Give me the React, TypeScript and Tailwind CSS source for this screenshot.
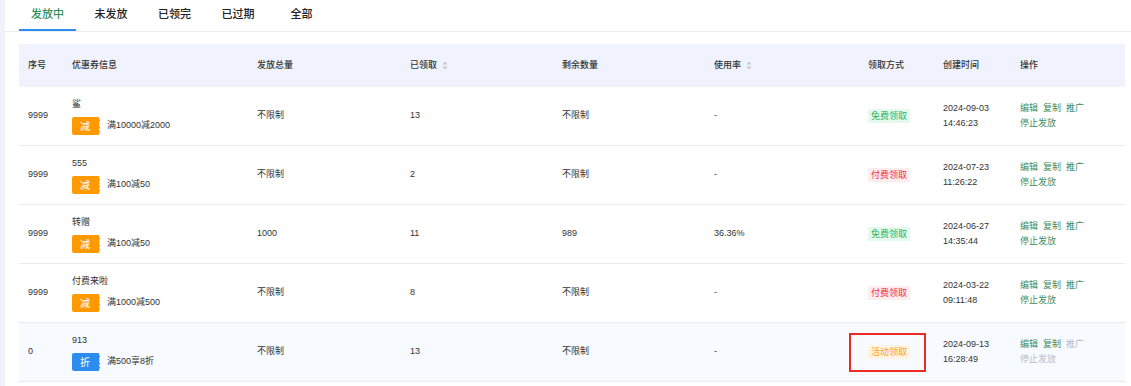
type Row = {
  id: string
  title: string
  kind: 'reduce' | 'discount'
  rule: string
  total: string
  claimed: string
  remain: string
  rate: string
  method: 'free' | 'paid' | 'event'
  date: string
  time: string
  disabled?: boolean
  highlight?: boolean
}

const rows: Row[] = [
  { id: '9999', title: '鲨', kind: 'reduce', rule: '满10000减2000', total: '不限制', claimed: '13', remain: '不限制', rate: '-', method: 'free', date: '2024-09-03', time: '14:46:23' },
  { id: '9999', title: '555', kind: 'reduce', rule: '满100减50', total: '不限制', claimed: '2', remain: '不限制', rate: '-', method: 'paid', date: '2024-07-23', time: '11:26:22' },
  { id: '9999', title: '转赠', kind: 'reduce', rule: '满100减50', total: '1000', claimed: '11', remain: '989', rate: '36.36%', method: 'free', date: '2024-06-27', time: '14:35:44' },
  { id: '9999', title: '付费来啦', kind: 'reduce', rule: '满1000减500', total: '不限制', claimed: '8', remain: '不限制', rate: '-', method: 'paid', date: '2024-03-22', time: '09:11:48' },
  { id: '0', title: '913', kind: 'discount', rule: '满500享8折', total: '不限制', claimed: '13', remain: '不限制', rate: '-', method: 'event', date: '2024-09-13', time: '16:28:49', disabled: true, highlight: true },
]

const tabs = ['发放中', '未发放', '已领完', '已过期', '全部']

const methodMeta = {
  free: { label: '免费领取', cls: 'bg-[#e6f9ed] text-[#2bb35e]' },
  paid: { label: '付费领取', cls: 'bg-[#ffedf0] text-[#f0303f]' },
  event: { label: '活动领取', cls: 'bg-[#fff4e2] text-[#ff9c1f]' },
}

const cols = 'grid grid-cols-[44px_185px_153px_152px_152px_154px_75px_77px_114px]'

function SortIcon() {
  return (
    <svg width="6" height="9" viewBox="0 0 6 9" className="ml-[5px]">
      <path d="M3 0.5L5.5 3.5H0.5Z" fill="#c5c8ce" />
      <path d="M3 8.5L5.5 5.5H0.5Z" fill="#c5c8ce" />
    </svg>
  )
}

function CouponTag({ kind }: { kind: Row['kind'] }) {
  const bg = kind === 'reduce' ? 'bg-[#ff9900]' : 'bg-[#2d8cf0]'
  return (
    <span className={`relative flex h-[18px] w-[28px] items-center justify-center rounded-[2px] pr-[2px] text-[10px] text-white ${bg}`}>
      {kind === 'reduce' ? '减' : '折'}
      <span className="absolute right-[-1.5px] top-0 bottom-0 flex flex-col justify-around">
        {[0, 1, 2, 3, 4].map((i) => (
          <span key={i} className="block h-[3px] w-[3px] rounded-full bg-white" />
        ))}
      </span>
    </span>
  )
}

export default function App() {
  return (
    <div className="flex h-[386px] w-[1131px] bg-white text-[9px] text-[#333] [font-family:'Liberation_Sans','Noto_Sans_CJK_SC',sans-serif]">
      <div className="w-[5px] shrink-0 bg-[#eff1fb]" />
      <div className="flex-1">
        <div className="flex h-[32px] gap-[6.5px] border-b border-[#eceef2] pl-[14px]">
          {tabs.map((t, i) => (
            <div
              key={t}
              className={`flex w-[57px] items-center justify-center pb-[1px] text-[11px] font-medium ${
                i === 0 ? 'border-b-2 border-[#2d8cf0] text-[#2f8f58]' : 'border-b-2 border-transparent text-[#222]'
              }`}
            >
              {t}
            </div>
          ))}
        </div>

        <div className="ml-[14px] mt-[12px] w-[1106px]">
          <div className={`${cols} h-[43px] items-center bg-[#f0f3fd] font-medium text-[#333]`}>
            <div className="pl-[9px]">序号</div>
            <div className="pl-[9px]">优惠券信息</div>
            <div className="pl-[9px]">发放总量</div>
            <div className="flex items-center pl-[9px]">已领取<SortIcon /></div>
            <div className="pl-[9px]">剩余数量</div>
            <div className="flex items-center pl-[9px]">使用率<SortIcon /></div>
            <div className="pl-[9px]">领取方式</div>
            <div className="pl-[9px]">创建时间</div>
            <div className="pl-[9px]">操作</div>
          </div>

          {rows.map((r, idx) => {
            const m = methodMeta[r.method]
            return (
              <div
                key={idx}
                className={`${cols} h-[59px] items-center border-b border-[#e9ebef] ${r.highlight ? 'bg-[#f7faff]' : ''}`}
              >
                <div className="pl-[9px]">{r.id}</div>
                <div className="flex flex-col gap-[5px] pl-[9px]">
                  <span className="leading-[15px]">{r.title}</span>
                  <div className="flex items-center gap-[7px]">
                    <CouponTag kind={r.kind} />
                    <span>{r.rule}</span>
                  </div>
                </div>
                <div className="pl-[9px]">{r.total}</div>
                <div className="pl-[9px]">{r.claimed}</div>
                <div className="pl-[9px]">{r.remain}</div>
                <div className="pl-[9px]">{r.rate}</div>
                <div className="relative flex h-full items-center pl-[9px]">
                  <span className={`px-[3px] leading-[14px] ${m.cls}`}>{m.label}</span>
                  {r.highlight ? (
                    <div className="absolute left-[-10px] top-[10px] h-[39px] w-[77px] border-2 border-[#ee2a22]" />
                  ) : null}
                </div>
                <div className="pl-[9px] leading-[15px]">
                  <div>{r.date}</div>
                  <div>{r.time}</div>
                </div>
                <div className="pl-[9px] leading-[15px]">
                  <div className="flex gap-[5px]">
                    <span className="text-[#3f8c5c]">编辑</span>
                    <span className="text-[#3f8c5c]">复制</span>
                    <span className={r.disabled ? 'text-[#b9bcc2]' : 'text-[#3f8c5c]'}>推广</span>
                  </div>
                  <div className={r.disabled ? 'text-[#b9bcc2]' : 'text-[#3f8c5c]'}>停止发放</div>
                </div>
              </div>
            )
          })}
        </div>
      </div>
    </div>
  )
}
